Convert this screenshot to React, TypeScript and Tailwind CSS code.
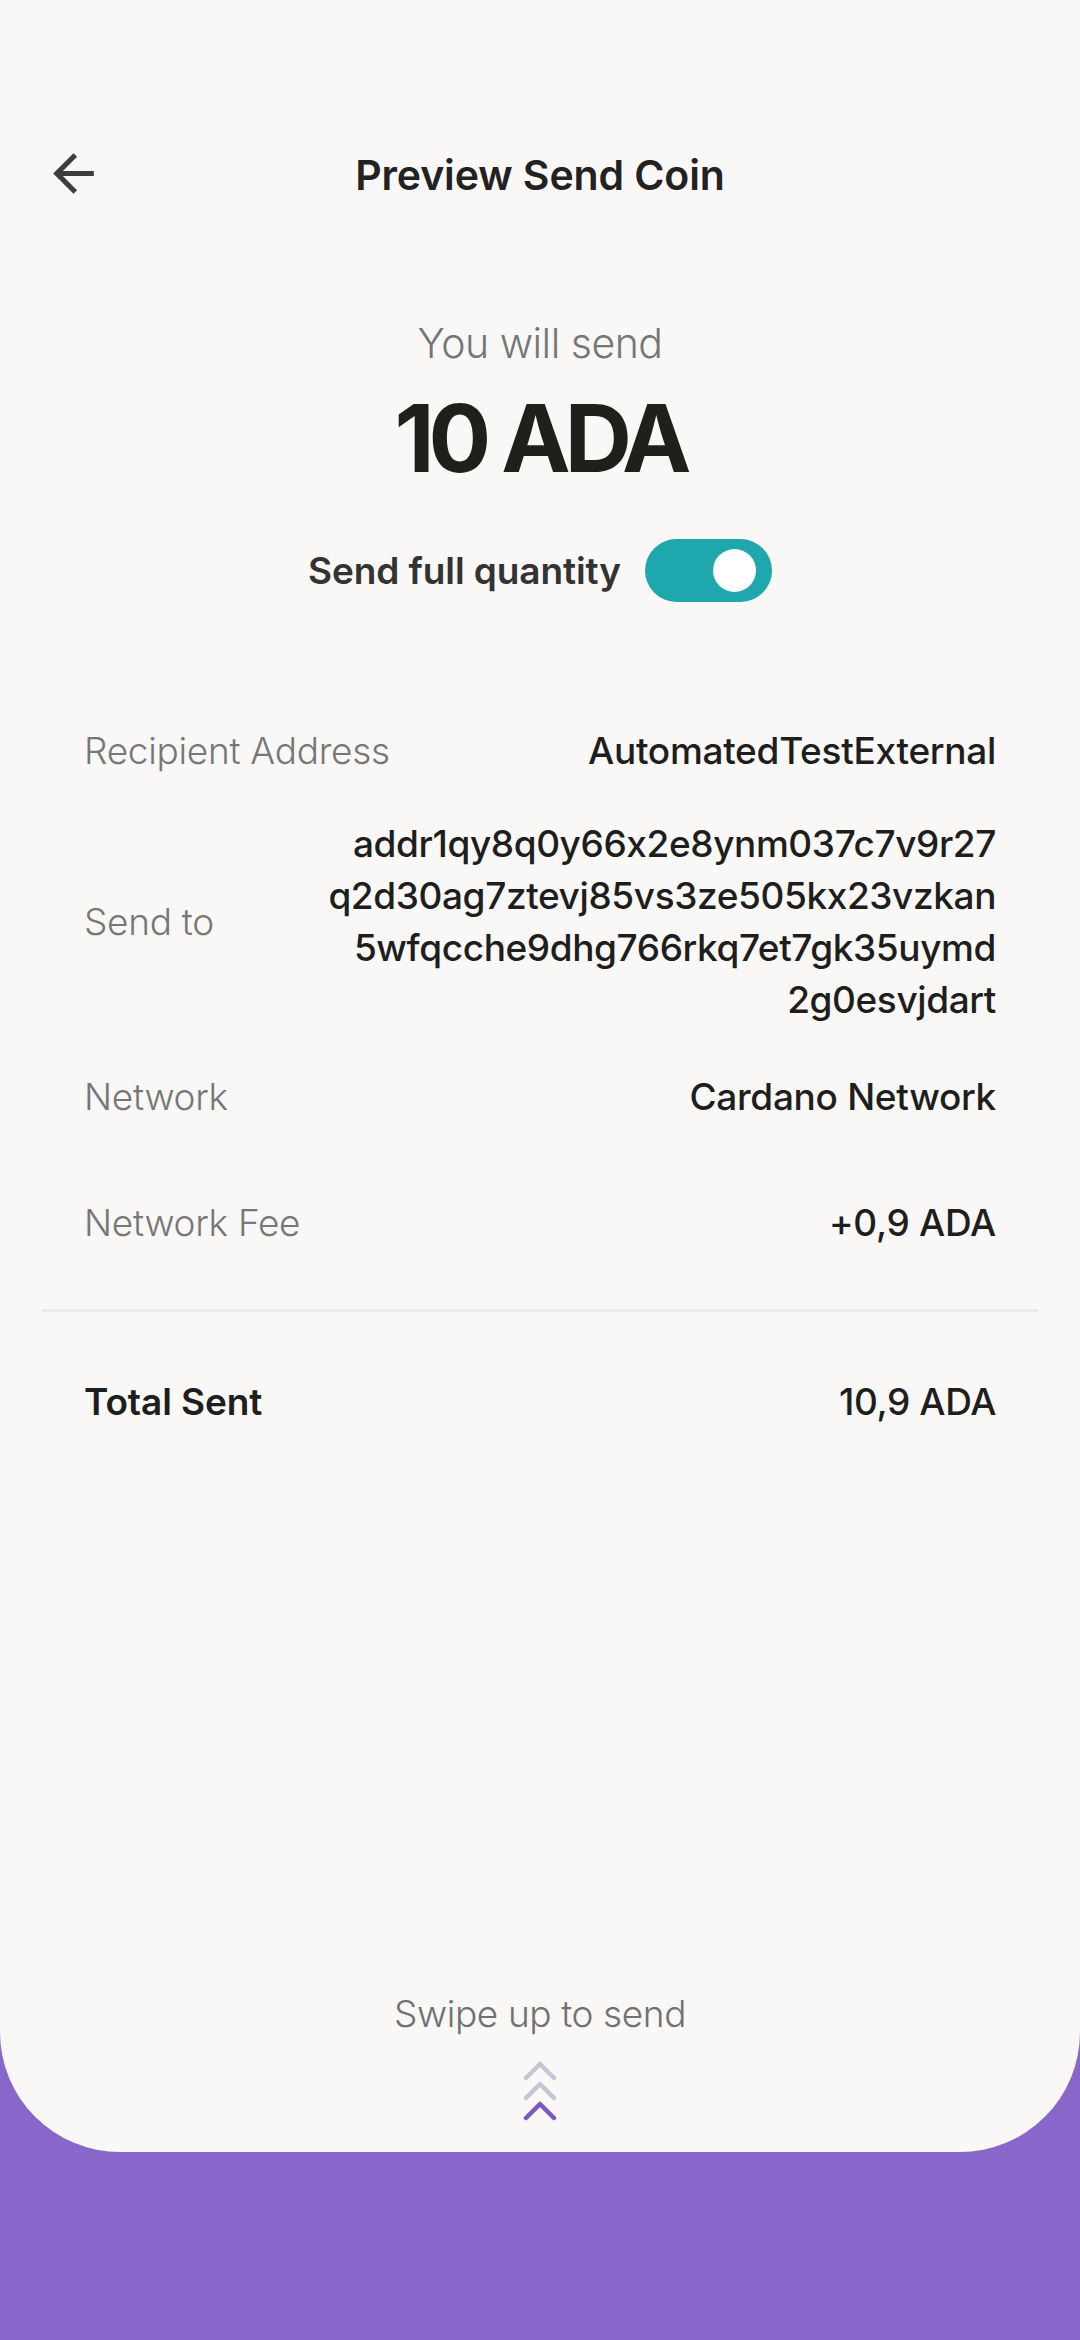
import React from 'react'

const font = { fontFamily: 'Inter, "Noto Sans", sans-serif' }

type RowProps = {
  label: string
  value: string
  className?: string
}

const DetailRow = ({ label, value, className = '' }: RowProps) => (
  <div className={`flex justify-between items-center leading-[52px] text-[37px] ${className}`}>
    <span className="text-[#777777] font-light tracking-[-0.3px]">{label}</span>
    <span className="text-[#1e1e1e] font-medium tracking-[-0.3px]">{value}</span>
  </div>
)

const Chevron = ({ color }: { color: string }) => (
  <svg width="36" height="21" viewBox="0 0 36 21" fill="none">
    <polyline points="4,18 18,4 32,18" stroke={color} strokeWidth="4.5" strokeLinecap="round" strokeLinejoin="round" />
  </svg>
)

const addressLines = [
  'addr1qy8q0y66x2e8ynm037c7v9r27',
  'q2d30ag7ztevj85vs3ze505kx23vzkan',
  '5wfqcche9dhg766rkq7et7gk35uymd',
  '2g0esvjdart',
]

export default function App() {
  return (
    <div className="min-h-[2340px] bg-[#8967ca] flex flex-col" style={font}>
      <div className="h-[2152px] bg-[#f9f8f6] rounded-b-[120px] flex flex-col">
        {/* header */}
        <div className="mt-[141px] grid grid-cols-[1fr_auto_1fr] items-center h-[61px]">
          <div className="pl-[43px]">
            <svg width="61" height="61" viewBox="0 0 24 24" fill="#3d3d3d">
              <path d="M20 11H7.83l5.59-5.59L12 4l-8 8 8 8 1.41-1.41L7.83 13H20v-2z" />
            </svg>
          </div>
          <h1 className="text-[41px] font-semibold text-[#222222] tracking-[-0.1px] mt-[4px]">Preview Send Coin</h1>
          <div />
        </div>

        {/* amount */}
        <p className="mt-[115px] text-center text-[41px] leading-[52px] font-light text-[#767676] tracking-[-0.5px]">You will send</p>
        <p className="mt-[21px] text-center text-[93px] leading-[96px] font-bold text-[#211f1c] tracking-[-6px]">10 ADA</p>

        <div className="mt-[53px] flex justify-center items-center gap-[24px] h-[63px]">
          <span className="text-[37px] font-semibold text-[#333333] tracking-[-0.1px]">Send full quantity</span>
          <div className="w-[127px] h-[63px] rounded-full bg-[#1ea8ad] flex items-center justify-end pr-[16px]">
            <div className="w-[43px] h-[43px] rounded-full bg-white" />
          </div>
        </div>

        {/* details */}
        <div className="mt-[123px] px-[84px]">
          <DetailRow label="Recipient Address" value="AutomatedTestExternal" />
          <div className="mt-[41px] flex justify-between items-center text-[37px] leading-[52px]">
            <span className="text-[#777777] font-light tracking-[-0.3px]">Send to</span>
            <div className="flex flex-col items-end text-[#1e1e1e] font-medium tracking-[-0.4px]">
              {addressLines.map(line => (
                <span key={line}>{line}</span>
              ))}
            </div>
          </div>
          <DetailRow label="Network" value="Cardano Network" className="mt-[45px]" />
          <DetailRow label="Network Fee" value="+0,9 ADA" className="mt-[74px]" />
        </div>

        <div className="mt-[60px] mx-[42px] h-[3px] bg-[#e9e9ee]" />

        <div className="mt-[64px] px-[84px] flex justify-between items-center text-[37px] leading-[52px] text-[#1e1e1e] tracking-[-0.1px]">
          <span className="font-semibold">Total Sent</span>
          <span className="font-medium tracking-[-0.4px]">10,9 ADA</span>
        </div>

        <div className="flex-1" />

        {/* swipe */}
        <div className="flex flex-col items-center pb-[31px]">
          <span className="text-[37px] leading-[52px] font-light text-[#717171] tracking-[-0.4px]">Swipe up to send</span>
          <div className="mt-[20px] flex flex-col items-center -space-y-[1px]">
            <Chevron color="#c3c9d4" />
            <Chevron color="#c3c9d4" />
            <Chevron color="#7c58c1" />
          </div>
        </div>
      </div>
    </div>
  )
}
